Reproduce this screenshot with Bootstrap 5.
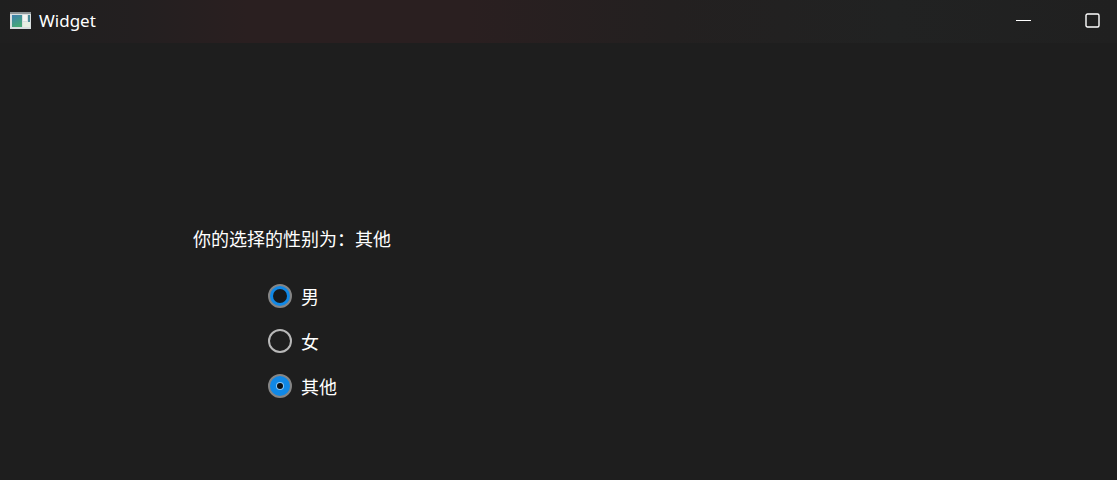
<!DOCTYPE html>
<html lang="zh">
<head>
<meta charset="utf-8">
<title>Widget</title>
<link href="https://cdn.jsdelivr.net/npm/bootstrap@5.3.0/dist/css/bootstrap.min.css" rel="stylesheet">
<style>
html,body{height:100%;}
body{background:#1e1e1e;color:#fff;font-family:"Noto Sans CJK SC","Liberation Sans",sans-serif;overflow:hidden;}
.win-frame{height:480px;}
.win-bar{height:43px;padding:0 0 3px 10px;background:linear-gradient(90deg,#1f1f1f 0%,#231f20 12%,#2a1f20 22%,#2a1f20 42%,#232020 60%,#212222 80%,#202020 100%);}
.win-title{font-family:"Noto Sans","Liberation Sans",sans-serif;font-size:17px;margin-left:8px;line-height:1;color:#fff;}
.win-btns{gap:54px;padding:0 17px 0 0;}
.win-body{padding:183px 0 0 193px;}
.result-line{font-size:18px;line-height:24px;margin:0;color:#fff;height:24px;letter-spacing:0;}
.radio-col{margin:34px 0 0 75px;gap:21px;}
.radio-row{height:24px;gap:9px;margin:0;padding:0;}
.radio-row .form-check-input{appearance:none;width:24px;height:24px;margin:0;float:none;flex:none;border-radius:50%;background:#1e1e1e;border:2px solid #b8b8b8;background-image:none;}
.radio-row .radio-hover{border-color:#858585;background:#1088e6;position:relative;}
.radio-row .radio-hover::after{content:"";position:absolute;left:3px;top:3px;width:14px;height:14px;border-radius:50%;background:#16191c;}
.radio-row .radio-on{border-color:#858585;background:#1088e6;position:relative;}
.radio-row .radio-on::after{content:"";position:absolute;left:7px;top:7px;width:6px;height:6px;border-radius:50%;background:#0c1014;box-shadow:0 0 0 1px #8cc6f2;}
.radio-row .form-check-label{font-size:18px;line-height:24px;color:#fff;}
</style>
</head>
<body>
<div class="win-frame d-flex flex-column">
  <div class="win-bar d-flex align-items-center">
    <svg width="21" height="17" viewBox="0 0 21 17" aria-hidden="true">
      <defs><linearGradient id="ig" x1="0" y1="0" x2="0.4" y2="1"><stop offset="0" stop-color="#3f7fb0"/><stop offset="1" stop-color="#46a878"/></linearGradient></defs>
      <rect width="21" height="17" fill="#d9dedf"/>
      <rect x="0" y="0" width="21" height="2" fill="#8f9698"/>
      <rect x="2" y="3" width="10" height="12" fill="url(#ig)"/>
      <rect x="13" y="3" width="4" height="6" fill="#f4f6f2"/>
      <rect x="18" y="3" width="2" height="7" fill="#4a8a96"/>
      <rect x="13" y="10" width="7" height="5" fill="#e6efe2"/>
    </svg>
    <span class="win-title">Widget</span>
    <div class="win-btns d-flex align-items-center ms-auto">
      <svg width="15" height="15" viewBox="0 0 15 15" aria-hidden="true"><rect x="0" y="7" width="15" height="1" fill="#fff"/></svg>
      <svg width="15" height="15" viewBox="0 0 15 15" aria-hidden="true"><rect x="1" y="1" width="13" height="13" rx="1.5" fill="none" stroke="#fff" stroke-width="1.4"/></svg>
    </div>
  </div>
  <div class="win-body flex-grow-1">
    <p class="result-line">你的选择的性别为：其他</p>
    <div class="radio-col d-flex flex-column">
      <div class="form-check radio-row d-flex align-items-center">
        <input class="form-check-input radio-hover" type="radio" name="g1" id="r1">
        <label class="form-check-label" for="r1">男</label>
      </div>
      <div class="form-check radio-row d-flex align-items-center">
        <input class="form-check-input" type="radio" name="g1" id="r2">
        <label class="form-check-label" for="r2">女</label>
      </div>
      <div class="form-check radio-row d-flex align-items-center">
        <input class="form-check-input radio-on" type="radio" name="g1" id="r3">
        <label class="form-check-label" for="r3">其他</label>
      </div>
    </div>
  </div>
</div>
<script src="https://cdn.jsdelivr.net/npm/bootstrap@5.3.0/dist/js/bootstrap.bundle.min.js"></script>
</body>
</html>
